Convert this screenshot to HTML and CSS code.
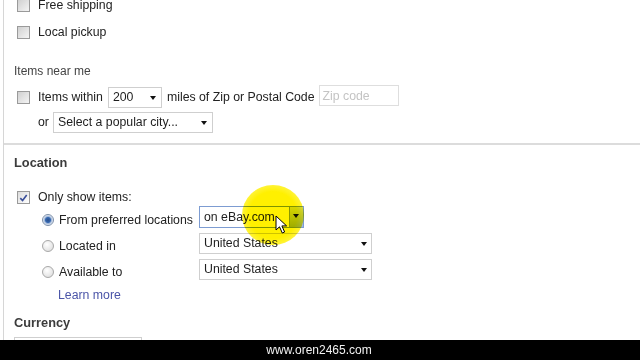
FILE: index.html
```html
<!DOCTYPE html>
<html>
<head>
<meta charset="utf-8">
<link rel="stylesheet" href="styles.css">
</head>
<body>
<div class="screen">
  <div class="panel">
    <div class="row r-free"><span class="cb"></span><span class="lbl">Free shipping</span></div>
    <div class="row r-pickup"><span class="cb"></span><span class="lbl">Local pickup</span></div>
    <div class="sub r-near">Items near me</div>
    <div class="row r-within">
      <span class="cb"></span><span class="lbl">Items within</span>
      <span class="sel sel-200">200<i class="arr"></i></span>
      <span class="lbl">miles of Zip or Postal Code</span>
      <span class="zip">Zip code</span>
    </div>
    <div class="row r-or">
      <span class="lbl or">or</span>
      <span class="sel sel-city">Select a popular city...<i class="arr"></i></span>
    </div>
    <div class="rule"></div>
    <div class="head r-loc">Location</div>
    <div class="row r-only"><span class="cb checked"><svg viewBox="0 0 12 12" width="12" height="12"><path d="M2.5 6.2 L5 8.8 L9.5 2.8" fill="none" stroke="#3a4f9a" stroke-width="1.8"/></svg></span><span class="lbl">Only show items:</span></div>
    <div class="row opt r-pref">
      <span class="rad on"></span><span class="lbl olbl">From preferred locations</span>
      <span class="sel sel-ebay focus">on eBay.com<span class="btn"><i class="arr"></i></span></span>
    </div>
    <div class="row opt r-in">
      <span class="rad"></span><span class="lbl olbl">Located in</span>
      <span class="sel sel-us">United States<i class="arr"></i></span>
    </div>
    <div class="row opt r-avail">
      <span class="rad"></span><span class="lbl olbl">Available to</span>
      <span class="sel sel-us">United States<i class="arr"></i></span>
    </div>
    <div class="row r-learn"><a class="link">Learn more</a></div>
    <div class="head r-cur">Currency</div>
    <div class="cur-sel"></div>
  </div>
  <div class="footer">www.oren2465.com</div>
  <div class="spot"></div>
  <svg class="cursor" width="14" height="20" viewBox="0 0 14 20"><path d="M1 1 L1 15 L4.5 11.8 L7.3 18 L9.6 17 L6.9 10.9 L11.6 10.9 Z" fill="#fff" stroke="#000" stroke-width="1" stroke-linejoin="round"/></svg>
</div>
</body>
</html>
```
FILE: styles.css
```css
html, body { margin: 0; padding: 0; background: #fff; }
body { font-family: "Liberation Sans", Arial, sans-serif; font-size: 12.3px; color: #222; }
.screen { position: relative; width: 640px; height: 360px; overflow: hidden; }
.panel { margin-left: 3px; height: 340px; border-left: 1px solid #d6d6d6; overflow: hidden; display: flex; flex-direction: column; padding-left: 10px; }
.row { display: flex; align-items: center; flex: none; }
.cb { width: 11px; height: 11px; border: 1px solid #9a9a9a; background: linear-gradient(135deg, #d0d0d0, #f4f4f4); margin-left: 3px; margin-right: 8px; flex: none; display: flex; }
.cb.checked { background: linear-gradient(135deg, #dcdcdc, #fff); }
.cb svg { display: block; }
.lbl { white-space: nowrap; }
.r-free { height: 28px; margin-top: -9px; }
.r-pickup { height: 28px; margin-top: -1px; }
.sub { height: 22px; line-height: 22px; margin-top: 14px; color: #444; font-size: 12px; }
.r-within { height: 26px; margin-top: 2px; }
.sel { position: relative; box-sizing: border-box; height: 21px; border: 1px solid #cfcfcf; background: #fff; padding-left: 4px; display: flex; align-items: center; white-space: nowrap; color: #1e1e1e; }
.arr { position: absolute; width: 0; height: 0; border-left: 3.5px solid transparent; border-right: 3.5px solid transparent; border-top: 4px solid #111; top: 8px; }
.sel-200 { width: 54px; margin-left: 5px; margin-right: 5px; }
.sel-200 .arr { left: 41px; }
.zip { box-sizing: border-box; width: 80px; height: 21px; border: 1px solid #dedede; color: #c4c4c4; padding-left: 3px; display: flex; align-items: center; margin-left: 4px; margin-top: -3px; }
.r-or { height: 24px; }
.or { margin-left: 24px; margin-right: 4px; }
.sel-city { width: 160px; }
.sel-city .arr { left: 147px; }
.rule { height: 2px; background: #dcdcdc; margin: 9px 0 0 -10px; flex: none; }
.head { height: 22px; line-height: 22px; font-weight: bold; font-size: 12.8px; color: #3c3c3c; flex: none; }
.r-loc { margin-top: 7px; }
.r-only { height: 22px; margin-top: 12px; }
.opt { height: 23px; }
.r-pref { margin-top: 0; }
.r-in { margin-top: 3px; }
.r-avail { margin-top: 3px; }
.rad { width: 10px; height: 10px; border-radius: 50%; border: 1px solid #a8a8a8; background: radial-gradient(circle at 40% 35%, #fff, #d8d8d8); margin-left: 28px; margin-right: 5px; flex: none; box-sizing: content-box; }
.rad.on { background: radial-gradient(circle, #2b4f8a 0, #3567b0 2.5px, #9fb6d8 3.5px, #e8eef6 5px); border-color: #7d8fa8; }
.olbl { width: 140px; }
.r-pref .sel, .r-in .sel, .r-avail .sel { margin-top: -5px; }
.sel-ebay { width: 105px; height: 22px; border-color: #7d9cd2; }
.sel-ebay .btn { position: absolute; right: 0; top: 0; bottom: 0; width: 13px; border-left: 1px solid #8aa0c8; background: linear-gradient(#d6e3f6, #9fb7e0); }
.sel-ebay .btn .arr { left: 3px; top: 7px; }
.sel-us { width: 173px; }
.sel-us .arr { left: 161px; }
.r-learn { height: 20px; margin-top: 2px; padding-left: 44px; }
.link { color: #4b55a8; font-size: 12.3px; }
.r-cur { margin-top: 7px; }
.cur-sel { width: 126px; height: 10px; margin-top: 3px; border: 1px solid #cfcfcf; border-bottom: none; flex: none; }
.footer { height: 20px; background: #000; color: #f2f2f2; font-size: 12px; display: flex; align-items: center; justify-content: center; padding-right: 2px; }
.spot { position: absolute; left: 242px; top: 185px; width: 62px; height: 60px; border-radius: 50%; background: radial-gradient(ellipse, #fff000 0, #fff000 55%, rgba(255,240,0,0.65) 80%, rgba(255,240,0,0) 100%); mix-blend-mode: multiply; }
.cursor { position: absolute; left: 275px; top: 215px; }
```
